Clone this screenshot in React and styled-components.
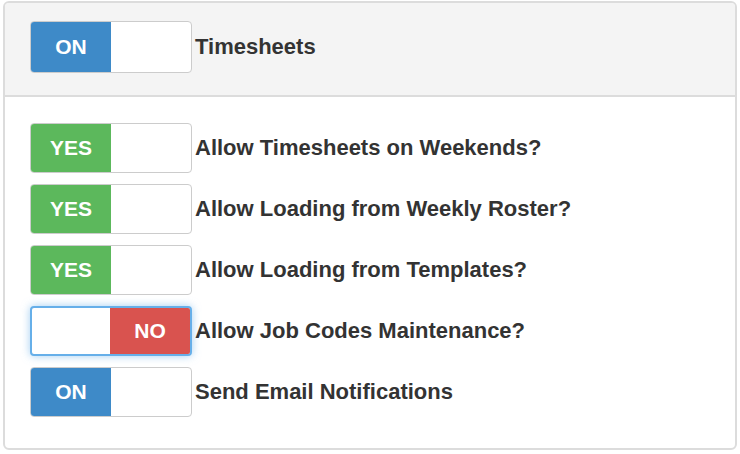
import React from "react";
import styled, { createGlobalStyle, css } from "styled-components";

const Global = createGlobalStyle`
  html, body { margin: 0; padding: 0; background: #fff; }
  body { font-family: "Liberation Sans", Arial, sans-serif; }
`;

const Panel = styled.div`
  box-sizing: border-box;
  width: 734px;
  height: 449px;
  margin: 1px 0 0 3px;
  border: 2px solid #dcdcdc;
  border-radius: 6px;
  overflow: hidden;
  display: flex;
  flex-direction: column;
`;

const Heading = styled.div`
  background: #f4f4f4;
  border-bottom: 2px solid #dcdcdc;
  height: 94px;
  box-sizing: border-box;
  padding: 18px 25px 0;
  display: flex;
  align-items: flex-start;
`;

const Body = styled.div`
  padding: 26px 25px 0;
  display: flex;
  flex-direction: column;
  gap: 11px;
`;

const Row = styled.div`
  display: flex;
  align-items: center;
  gap: 3px;
`;

const colors = { primary: "#3e8ac8", success: "#5cb85c", danger: "#d9534f" };

const Switch = styled.div`
  box-sizing: border-box;
  width: 162px;
  height: ${(p) => (p.$tall ? 52 : 50)}px;
  border: 1px solid #cccccc;
  border-radius: 4px;
  overflow: hidden;
  display: flex;
  flex-direction: ${(p) => (p.$off ? "row-reverse" : "row")};
  background: #fff;
  ${(p) =>
    p.$focus &&
    css`
      border: 2px solid #66afe9;
      box-shadow: 0 0 8px rgba(102, 175, 233, 0.6);
    `}
`;

const Half = styled.span`
  width: 80px;
  display: flex;
  align-items: center;
  justify-content: center;
  font-weight: bold;
  font-size: 21px;
  color: #fff;
  background: ${(p) => colors[p.$color]};
`;

const Label = styled.span`
  font-weight: bold;
  font-size: 22px;
  color: #333;
`;

const Toggle = ({ on, text, color, tall, focus }) => (
  <Switch $off={!on} $tall={tall} $focus={focus}>
    <Half $color={color}>{text}</Half>
  </Switch>
);

const items = [
  { on: true, text: "YES", color: "success", label: "Allow Timesheets on Weekends?" },
  { on: true, text: "YES", color: "success", label: "Allow Loading from Weekly Roster?" },
  { on: true, text: "YES", color: "success", label: "Allow Loading from Templates?" },
  { on: false, text: "NO", color: "danger", label: "Allow Job Codes Maintenance?", focus: true },
  { on: true, text: "ON", color: "primary", label: "Send Email Notifications" },
];

export default function App() {
  return (
    <>
      <Global />
      <Panel>
        <Heading>
          <Row>
            <Toggle on text="ON" color="primary" tall />
            <Label>Timesheets</Label>
          </Row>
        </Heading>
        <Body>
          {items.map((it) => (
            <Row key={it.label}>
              <Toggle {...it} />
              <Label>{it.label}</Label>
            </Row>
          ))}
        </Body>
      </Panel>
    </>
  );
}
